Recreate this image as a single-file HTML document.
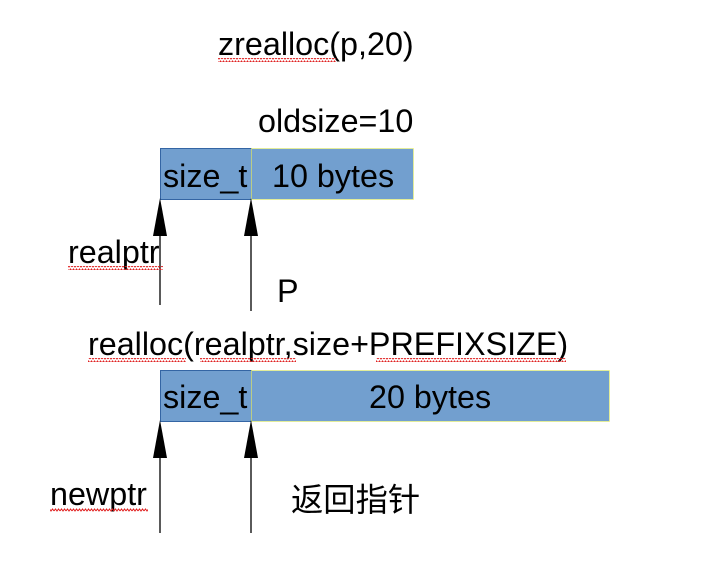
<!DOCTYPE html>
<html><head><meta charset="utf-8"><style>
html,body{margin:0;padding:0;background:#fff;width:703px;height:563px;overflow:hidden}
text{font-family:"Liberation Sans","Noto Sans CJK SC",sans-serif;font-size:32.3px;fill:#000}
</style></head><body>
<svg width="703" height="563" viewBox="0 0 703 563" xmlns="http://www.w3.org/2000/svg">
<defs>
<pattern id="wv" width="6" height="4" patternUnits="userSpaceOnUse">
<path d="M0 3 L1.5 1 L3 3 L4.5 1 L6 3" stroke="#e02020" stroke-width="1" fill="none"/>
</pattern>
</defs>
<text x="218" y="55">zrealloc(p,20)</text>
<rect x="218" y="58" width="118" height="4" fill="url(#wv)"/>
<text x="258" y="132">oldsize=10</text>
<rect x="160.5" y="148.5" width="91" height="51" fill="#729fcf" stroke="#3465a4"/>
<rect x="251.5" y="148.5" width="162" height="51" fill="#729fcf" stroke="#ffff66" stroke-opacity="0.6"/>
<text x="163" y="187">size_t</text>
<text x="272" y="187">10 bytes</text>
<line x1="160" y1="225" x2="160" y2="305" stroke="#000" stroke-width="1.3"/>
<polygon points="160,198 153,236 167,236" fill="#000"/>
<line x1="251" y1="225" x2="251" y2="311" stroke="#000" stroke-width="1.3"/>
<polygon points="251,198 244,236 258,236" fill="#000"/>
<text x="68" y="263">realptr</text>
<rect x="68" y="266" width="95" height="4" fill="url(#wv)"/>
<text x="277" y="302">P</text>
<text x="88" y="355">realloc(realptr,size+PREFIXSIZE)</text>
<rect x="88" y="358" width="98" height="4" fill="url(#wv)"/>
<rect x="200" y="358" width="96" height="4" fill="url(#wv)"/>
<rect x="376" y="358" width="190" height="4" fill="url(#wv)"/>
<rect x="160.5" y="370.5" width="91" height="51" fill="#729fcf" stroke="#3465a4"/>
<rect x="251.5" y="370.5" width="358" height="51" fill="#729fcf" stroke="#ffff66" stroke-opacity="0.6"/>
<text x="163" y="408">size_t</text>
<text x="369" y="408">20 bytes</text>
<line x1="160" y1="450" x2="160" y2="533" stroke="#000" stroke-width="1.3"/>
<polygon points="160,420 153,458 167,458" fill="#000"/>
<line x1="251" y1="450" x2="251" y2="533" stroke="#000" stroke-width="1.3"/>
<polygon points="251,420 244,458 258,458" fill="#000"/>
<text x="50" y="505">newptr</text>
<rect x="50" y="508" width="98" height="4" fill="url(#wv)"/>
<text x="291" y="511">返回指针</text>
</svg>
</body></html>
